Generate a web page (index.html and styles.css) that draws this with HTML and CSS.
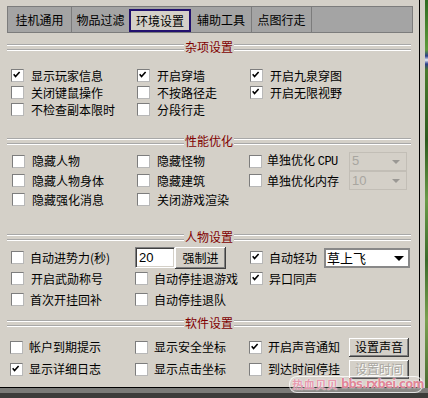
FILE: index.html
```html
<!DOCTYPE html>
<html lang="zh-CN">
<head>
<meta charset="utf-8">
<title>环境设置</title>
<link rel="stylesheet" href="styles.css">
</head>
<body>
<div class="screen">
  <div class="panel">
    <div class="tabs">
      <div class="tab t1">挂机通用</div>
      <div class="tab t2">物品过滤</div>
      <div class="tab t3 active">环境设置</div>
      <div class="tab t4">辅助工具</div>
      <div class="tab t5">点图行走</div>
    </div>

    <div class="hdr h1"><span class="ln"></span><span class="ht">杂项设置</span><span class="ln"></span></div>
    <div class="grid g1">
      <label class="cb"><span class="box on"><svg viewBox="0 0 13 13"><path d="M3 6 L5.2 8.6 L10 3.4"/></svg></span><span>显示玩家信息</span></label>
      <label class="cb"><span class="box on"><svg viewBox="0 0 13 13"><path d="M3 6 L5.2 8.6 L10 3.4"/></svg></span><span>开启穿墙</span></label>
      <label class="cb"><span class="box on"><svg viewBox="0 0 13 13"><path d="M3 6 L5.2 8.6 L10 3.4"/></svg></span><span>开启九泉穿图</span></label>
      <label class="cb"><span class="box"></span><span>关闭键鼠操作</span></label>
      <label class="cb"><span class="box"></span><span>不按路径走</span></label>
      <label class="cb"><span class="box on"><svg viewBox="0 0 13 13"><path d="M3 6 L5.2 8.6 L10 3.4"/></svg></span><span>开启无限视野</span></label>
      <label class="cb"><span class="box"></span><span>不检查副本限时</span></label>
      <label class="cb"><span class="box"></span><span>分段行走</span></label>
      <span></span>
    </div>

    <div class="hdr h2"><span class="ln"></span><span class="ht">性能优化</span><span class="ln"></span></div>
    <div class="grid g2">
      <label class="cb"><span class="box"></span><span>隐藏人物</span></label>
      <label class="cb"><span class="box"></span><span>隐藏怪物</span></label>
      <div class="cell"><label class="cb"><span class="box"></span><span>单独优化 <span class="lat">CPU</span></span></label><div class="sel dis">5<span class="arr"></span></div></div>
      <label class="cb"><span class="box"></span><span>隐藏人物身体</span></label>
      <label class="cb"><span class="box"></span><span>隐藏建筑</span></label>
      <div class="cell"><label class="cb"><span class="box"></span><span>单独优化内存</span></label><div class="sel dis">10<span class="arr"></span></div></div>
      <label class="cb"><span class="box"></span><span>隐藏强化消息</span></label>
      <label class="cb"><span class="box"></span><span>关闭游戏渲染</span></label>
      <span></span>
    </div>

    <div class="hdr h3"><span class="ln"></span><span class="ht">人物设置</span><span class="ln"></span></div>
    <div class="grid g3">
      <label class="cb"><span class="box"></span><span>自动进势力(秒)</span></label>
      <div class="cell"><div class="inp">20</div><div class="btn force">强制进</div></div>
      <div class="cell"><label class="cb"><span class="box on"><svg viewBox="0 0 13 13"><path d="M3 6 L5.2 8.6 L10 3.4"/></svg></span><span>自动轻功</span></label><div class="sel en">草上飞<span class="arr"></span></div></div>
      <label class="cb"><span class="box"></span><span class="pl2">开启武勋称号</span></label>
      <label class="cb"><span class="box"></span><span>自动停挂退游戏</span></label>
      <label class="cb"><span class="box on"><svg viewBox="0 0 13 13"><path d="M3 6 L5.2 8.6 L10 3.4"/></svg></span><span>异口同声</span></label>
      <label class="cb"><span class="box"></span><span>首次开挂回补</span></label>
      <label class="cb"><span class="box"></span><span>自动停挂退队</span></label>
      <span></span>
    </div>

    <div class="hdr h4"><span class="ln"></span><span class="ht">软件设置</span><span class="ln"></span></div>
    <div class="grid g4">
      <label class="cb"><span class="box"></span><span>帐户到期提示</span></label>
      <label class="cb"><span class="box"></span><span>显示安全坐标</span></label>
      <div class="cell"><label class="cb"><span class="box on"><svg viewBox="0 0 13 13"><path d="M3 6 L5.2 8.6 L10 3.4"/></svg></span><span>开启声音通知</span></label><div class="btn wide">设置声音</div></div>
      <label class="cb"><span class="box on"><svg viewBox="0 0 13 13"><path d="M3 6 L5.2 8.6 L10 3.4"/></svg></span><span>显示详细日志</span></label>
      <label class="cb"><span class="box"></span><span>显示点击坐标</span></label>
      <div class="cell"><label class="cb"><span class="box"></span><span>到达时间停挂</span></label><div class="btn wide off">设置时间</div></div>
    </div>
  </div>
  <div class="side"><span class="frame"></span><span class="img"></span></div>
  <div class="bottom"></div>
  <div class="wm"><span class="wm-cn">热血贝贝</span><span class="wm-en">bbs.rxbei.com</span></div>
</div>
</body>
</html>
```

FILE: styles.css
```css
* { box-sizing: border-box; }
html, body { margin: 0; padding: 0; }
body {
  width: 428px;
  height: 398px;
  overflow: hidden;
  background: #d4d0c8;
  font-family: "Noto Sans CJK SC", "Noto Sans", sans-serif;
  font-size: 12px;
  line-height: 14px;
  color: #000;
}
.screen {
  position: relative;
  width: 428px;
  height: 398px;
  display: grid;
  grid-template-columns: 420px 8px;
  grid-template-rows: 388px 10px;
}
.panel {
  background: #d4d0c8;
  border-right: 1px solid #000;
  border-bottom: 1px solid #000;
  padding: 6px 0 0 7px;
}
.side { display: flex; }
.side .frame { width: 5px; background: #d4d0c8; }
.side .img {
  flex: 1;
  background: linear-gradient(to bottom, #2f6a22 0, #5f9a3a 50px, #2a3d8a 56px, #e8eef8 60px, #2a3d8a 64px, #4a7a2c 70px, #2e5a1e 140px, #6a9a48 200px, #3c6a2a 260px, #7aa050 320px, #4a6a30 388px);
}
.bottom {
  grid-column: 1 / span 2;
  background: linear-gradient(to bottom, #7b7b78 0 5px, #3c3c3a 5px);
}

/* tabs */
.tabs {
  display: flex;
  width: 406px;
  height: 27px;
  background: #a4a4a4;
  border: 1px solid #7c7c7c;
}
.tab {
  display: flex;
  align-items: center;
  justify-content: center;
  padding-top: 1px;
}
.t1 { width: 64px; border-right: 1px solid #7c7c7c; }
.t2 { width: 57px; }
.t3 { width: 62px; }
.t4 { width: 61px; border-right: 1px solid #7c7c7c; }
.t5 { width: 60px; border-right: 1px solid #7c7c7c; }
.tab.active {
  margin-top: 2px;
  background: #d4d0c8;
  border: 2px solid #22116e;
  padding-top: 0;
}

/* section headers */
.hdr {
  display: flex;
  align-items: center;
  width: 404px;
  height: 12px;
}
.ln {
  flex: 1;
  height: 7px;
  background: linear-gradient(to bottom, #a8a8a8 0 1px, #fff 1px 2px, transparent 2px 5px, #a8a8a8 5px 6px, #fff 6px 7px);
}
.ht {
  color: #800000;
  line-height: 12px;
  padding: 0 1px;
}
.h1 { margin-top: 8px; }
.h2 { margin-top: 17px; }
.h3 { margin-top: 22px; }
.h4 { margin-top: 7px; }

/* grids */
.grid { display: grid; }
.g1 { margin-top: 14px; padding-left: 4px; grid-template-columns: 126px 113px 150px; grid-template-rows: 17px 17px 17px; }
.g2 { margin-top: 4px; padding-left: 5px; grid-template-columns: 125px 112px 158px; grid-template-rows: 20px 19px 19px; }
.g3 { margin-top: 4px; padding-left: 4px; grid-template-columns: 124px 115px 160px; grid-template-rows: 21px 21px 21px; }
.g4 { margin-top: 7px; padding-left: 3px; grid-template-columns: 125px 114px 160px; grid-template-rows: 22px 22px; }

.cell { display: flex; align-items: center; }
.cb {
  display: flex;
  align-items: center;
  gap: 7px;
  white-space: nowrap;
}
.g2 .cb { gap: 7px; }
.g2 .cell .cb { gap: 5px; }
.g3 .cb { gap: 6px; }
.g4 .cb { gap: 6px; }
.pl2 { padding-left: 1px; }
.box {
  flex: none;
  width: 13px;
  height: 13px;
  background: #fff;
  border: 1px solid;
  border-color: #7d7d7d #b8b8b8 #b8b8b8 #7d7d7d;
}
.box svg { display: block; width: 11px; height: 11px; margin: 0; overflow: visible; }
.box svg path { fill: none; stroke: #000; stroke-width: 1.9; transform: translate(-1px, -1px); }
.lat { font-family: "Liberation Mono", "DejaVu Sans Mono", monospace; font-size: 12px; letter-spacing: -0.5px; }

/* selects */
.sel {
  position: relative;
  margin-left: auto;
  height: 19px;
  display: flex;
  align-items: center;
  padding-left: 2px;
}
.sel.dis {
  width: 58px;
  border: 1px solid #c2beb6;
  color: #a8a6a0;
  font-family: "Liberation Sans", sans-serif;
  font-size: 13px;
}
.sel.dis .arr {
  position: absolute;
  right: 6px;
  top: 7px;
  border-left: 4px solid transparent;
  border-right: 4px solid transparent;
  border-top: 4px solid #9a9894;
}
.sel.en {
  width: 86px;
  height: 20px;
  background: #fff;
  border: 2px solid #888;
  padding-left: 1px;
  font-size: 13px;
}
.sel.en .arr {
  position: absolute;
  right: 4px;
  top: 6px;
  border-left: 5px solid transparent;
  border-right: 5px solid transparent;
  border-top: 5px solid #000;
}

/* input & buttons */
.inp {
  width: 40px;
  height: 21px;
  background: #fff;
  border: 1px solid;
  border-color: #808080 #fff #fff #808080;
  box-shadow: inset 1px 1px #404040, inset -1px -1px #d4d0c8;
  padding: 2px 0 0 3px;
  font-family: "Liberation Sans", sans-serif;
  font-size: 13px;
  line-height: 15px;
}
.btn {
  display: flex;
  align-items: center;
  justify-content: center;
  background: #d4d0c8;
  box-shadow: inset -1px -1px #404040, inset 1px 1px #fff, inset -2px -2px #808080;
  white-space: nowrap;
}
.btn.force { width: 51px; height: 22px; margin-left: 0; font-size: 12px; }
.btn.wide { width: 60px; height: 19px; margin-left: auto; }
.btn.off { color: #a8a6a0; text-shadow: 1px 1px #fff; }

/* watermark */
.wm {
  position: absolute;
  left: 289px;
  top: 376px;
  width: 134px;
  height: 17px;
  border: 1px solid rgba(255, 255, 255, 0.75);
  border-radius: 8px;
  background: rgba(255, 235, 235, 0.12);
  display: flex;
  align-items: center;
  gap: 3px;
  padding-left: 2px;
  white-space: nowrap;
  font-weight: bold;
  line-height: 13px;
  color: rgba(205, 55, 85, 0.62);
  text-shadow: 0 0 1px #fff, 0 0 2px rgba(255, 255, 255, 0.8);
}
.wm-cn { font-size: 11.5px; color: rgba(220, 110, 140, 0.7); }
.wm-en { font-family: "DejaVu Sans", sans-serif; font-size: 11.5px; letter-spacing: -0.7px; }
```
